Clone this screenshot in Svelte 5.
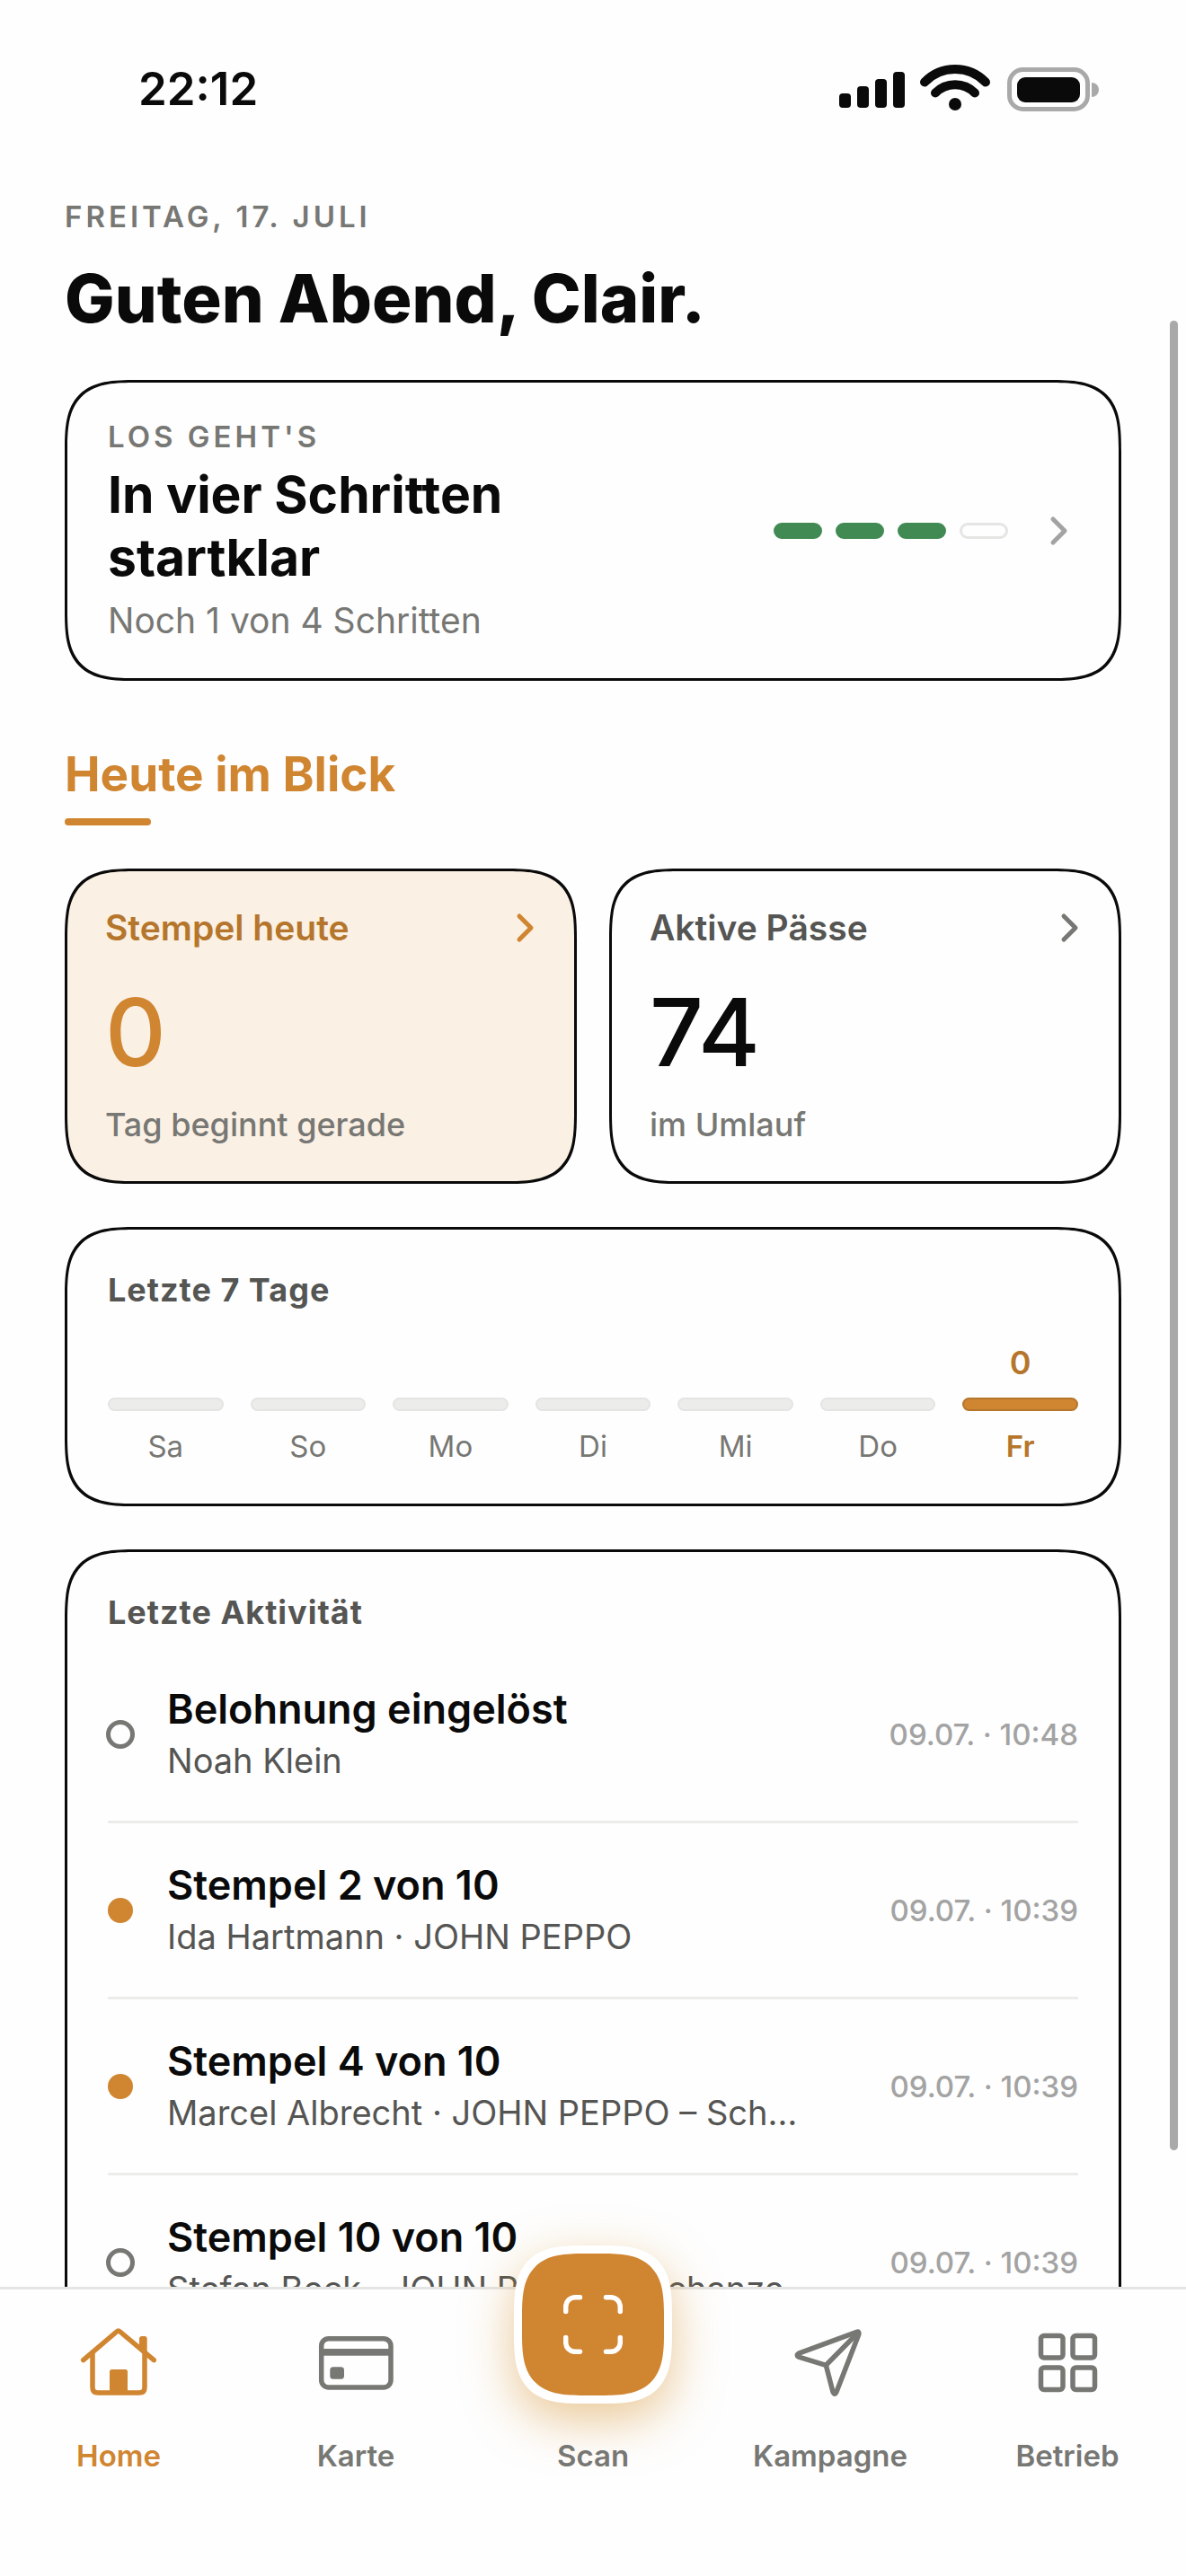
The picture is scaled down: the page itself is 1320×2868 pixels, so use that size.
<script lang="ts">
  interface Activity {
    title: string;
    detail: string;
    time: string;
    kind: 'stamp' | 'reward';
  }

  const steps = [true, true, true, false];

  const stats = [
    { label: 'Stempel heute', value: 0, note: 'Tag beginnt gerade', accent: true },
    { label: 'Aktive Pässe', value: 74, note: 'im Umlauf', accent: false },
  ];

  const days = [
    { name: 'Sa', count: 0 },
    { name: 'So', count: 0 },
    { name: 'Mo', count: 0 },
    { name: 'Di', count: 0 },
    { name: 'Mi', count: 0 },
    { name: 'Do', count: 0 },
    { name: 'Fr', count: 0, today: true },
  ];

  const activities: Activity[] = [
    { title: 'Belohnung eingelöst', detail: 'Noah Klein', time: '09.07. · 10:48', kind: 'reward' },
    { title: 'Stempel 2 von 10', detail: 'Ida Hartmann · JOHN PEPPO', time: '09.07. · 10:39', kind: 'stamp' },
    { title: 'Stempel 4 von 10', detail: 'Marcel Albrecht · JOHN PEPPO – Schanze', time: '09.07. · 10:39', kind: 'stamp' },
    { title: 'Stempel 10 von 10', detail: 'Stefan Beck · JOHN PEPPO – Schanze', time: '09.07. · 10:39', kind: 'reward' },
  ];

  const tabs = [
    { id: 'home', label: 'Home' },
    { id: 'karte', label: 'Karte' },
    { id: 'scan', label: 'Scan' },
    { id: 'kampagne', label: 'Kampagne' },
    { id: 'betrieb', label: 'Betrieb' },
  ];

  let active = $state('home');
</script>

{#snippet chevron()}
  <svg class="chevron" viewBox="0 0 42 42" aria-hidden="true">
    <path d="M14 8 L27 21 L14 34" />
  </svg>
{/snippet}

<div class="shell">
  <div class="status-bar">
    <span class="clock">22:12</span>
    <svg class="status-icons" viewBox="0 0 289 52" aria-hidden="true">
      <rect x="0" y="32" width="13" height="16" rx="4" />
      <rect x="20" y="24" width="13" height="24" rx="4" />
      <rect x="40" y="16" width="13" height="32" rx="4" />
      <rect x="60" y="8" width="13" height="40" rx="4" />
      <path class="wave" d="M95 19.5 A47.2 47.2 0 0 1 163 19.5" />
      <path class="wave" d="M107 31.5 A30.8 30.8 0 0 1 151 31.5" />
      <circle cx="129" cy="44" r="7" />
      <rect class="battery" x="189.5" y="5.5" width="87" height="44" rx="15" />
      <rect x="198" y="14" width="70" height="28" rx="9" />
      <path class="nub" d="M281 20 a8 8 0 0 1 0 16 z" />
    </svg>
  </div>

  <main>
    <header>
      <p class="eyebrow">Freitag, 17. Juli</p>
      <h1>Guten Abend, Clair.</h1>
    </header>

    <button class="card setup" type="button">
      <span class="setup-text">
        <span class="eyebrow">Los geht's</span>
        <span class="setup-title">In vier Schritten startklar</span>
        <span class="setup-note">Noch 1 von 4 Schritten</span>
      </span>
      <span class="steps">
        {#each steps as done}
          <span class="step" class:done></span>
        {/each}
      </span>
      {@render chevron()}
    </button>

    <h2>Heute im Blick</h2>

    <div class="stats">
      {#each stats as stat}
        <button class="card stat" class:accent={stat.accent} type="button">
          <span class="stat-head">
            <span class="stat-label">{stat.label}</span>
            {@render chevron()}
          </span>
          <span class="stat-value">{stat.value}</span>
          <span class="stat-note">{stat.note}</span>
        </button>
      {/each}
    </div>

    <section class="card panel">
      <h3>Letzte 7 Tage</h3>
      <div class="week">
        {#each days as day}
          <div class="day" class:today={day.today}>
            <span class="day-count">{day.today ? day.count : ''}</span>
            <span class="day-bar"></span>
            <span class="day-name">{day.name}</span>
          </div>
        {/each}
      </div>
    </section>

    <section class="card panel">
      <h3>Letzte Aktivität</h3>
      <ul class="activities">
        {#each activities as item}
          <li>
            <span class="dot-slot"><span class="dot {item.kind}"></span></span>
            <div class="activity-text">
              <p class="activity-title">{item.title}</p>
              <p class="activity-detail">{item.detail}</p>
            </div>
            <time>{item.time}</time>
          </li>
        {/each}
      </ul>
    </section>
  </main>

  <nav>
    {#each tabs as tab}
      <button
        class="tab"
        class:active={active === tab.id}
        type="button"
        onclick={() => (active = tab.id)}
      >
        {#if tab.id === 'scan'}
          <span class="scan">
            <svg viewBox="0 0 66 66" aria-hidden="true">
              <path d="M2.7 18.5 V13 A10.3 10.3 0 0 1 13 2.7 H18.5" />
              <path d="M47.5 2.7 H53 A10.3 10.3 0 0 1 63.3 13 V18.5" />
              <path d="M63.3 47.5 V53 A10.3 10.3 0 0 1 53 63.3 H47.5" />
              <path d="M18.5 63.3 H13 A10.3 10.3 0 0 1 2.7 53 V47.5" />
            </svg>
          </span>
        {/if}
        <svg class="tab-icon" viewBox="0 0 96 96" aria-hidden="true">
          {#if tab.id === 'home'}
            <path d="M8.7 45.7 L45.8 14 Q47.7 12.4 49.6 14 L87.3 45.7" />
            <path d="M19 38 V76 Q19 82 25 82 H71 Q77 82 77 76 V38" />
            <path class="solid" d="M71 34 V22 Q71 19 74 19 H77 Q79.7 19 79.7 22 V40 Z" />
            <path class="solid" d="M38 82 V58.5 Q38 56 40.5 56 H55.5 Q58 56 58 58.5 V82 Z" />
          {:else if tab.id === 'karte'}
            <rect x="9.7" y="21.7" width="77.3" height="54.3" rx="8" />
            <rect class="solid" x="9" y="33" width="78" height="7.7" />
            <rect class="solid" x="19.3" y="53.3" width="15.7" height="13.4" rx="3.5" />
          {:else if tab.id === 'kampagne'}
            <path d="M77.5 14.3 L13 38.2 Q9.5 40.3 13 42.2 L43.3 51.3 L51 81 Q53 85.5 55 81 L79.8 17 Q80.5 13.3 77.5 14.3 Z" />
            <path d="M43.3 51.3 L79 15" />
          {:else if tab.id === 'betrieb'}
            <rect x="18.5" y="18.5" width="24.5" height="24.5" rx="3.5" />
            <rect x="54" y="18.5" width="24.5" height="24.5" rx="3.5" />
            <rect x="18.5" y="54" width="24.5" height="24.5" rx="3.5" />
            <rect x="54" y="54" width="24.5" height="24.5" rx="3.5" />
          {/if}
        </svg>
        <span class="tab-label">{tab.label}</span>
      </button>
    {/each}
  </nav>

  <div class="scroll-thumb"></div>
</div>

<style>
  :global(body) {
    background: #fefefe;
  }

  .shell {
    --ink: #0a0a0a;
    --text: #555553;
    --muted: #777774;
    --faint: #a3a3a3;
    --line: #ececeb;
    --accent: #d08530;
    --accent-dark: #b5762c;
    position: relative;
    display: flex;
    flex-direction: column;
    height: 100vh;
    overflow: hidden;
    background: #fefefe;
    color: var(--ink);
    font-family: Inter, 'Liberation Sans', sans-serif;
  }

  h1,
  h2,
  h3,
  p,
  ul {
    margin: 0;
    padding: 0;
  }

  button {
    margin: 0;
    color: inherit;
    font: inherit;
    text-align: left;
    cursor: pointer;
  }

  .status-bar {
    flex: none;
    display: flex;
    align-items: center;
    justify-content: space-between;
    height: 196px;
    padding: 0 97px 0 154px;
  }

  .clock {
    font-size: 51px;
    font-weight: 600;
  }

  .status-icons {
    width: 289px;
    height: 52px;
    fill: var(--ink);
  }

  .wave {
    fill: none;
    stroke: var(--ink);
    stroke-width: 10;
    stroke-linecap: round;
  }

  .battery {
    fill: none;
    stroke: #a9a9a9;
    stroke-width: 5;
  }

  .nub {
    fill: #a9a9a9;
  }

  main {
    flex: 1;
    min-height: 0;
    display: flex;
    flex-direction: column;
    gap: 48px;
    padding: 24px 72px 0;
    overflow: hidden;
  }

  main > * {
    flex: none;
  }

  .eyebrow {
    font-size: 33px;
    line-height: 42px;
    font-weight: 600;
    letter-spacing: 4px;
    text-transform: uppercase;
    color: var(--muted);
  }

  h1 {
    margin-top: 27px;
    font-size: 74px;
    line-height: 86px;
    font-weight: 800;
  }

  .card {
    box-sizing: border-box;
    border: 3px solid var(--ink);
    border-radius: 60px;
    background: #fefefe;
  }

  .setup {
    display: flex;
    align-items: center;
    gap: 36px;
    padding: 39px 45px;
  }

  .setup-text {
    flex: 1;
    display: flex;
    flex-direction: column;
    gap: 9px;
  }

  .setup-title {
    max-width: 500px;
    font-size: 57px;
    line-height: 70px;
    font-weight: 700;
  }

  .setup-note {
    font-size: 39px;
    line-height: 51px;
    color: var(--muted);
  }

  .steps {
    display: flex;
    gap: 15px;
  }

  .step {
    box-sizing: border-box;
    width: 54px;
    height: 18px;
    border: 3px solid #e5e5e4;
    border-radius: 9px;
  }

  .step.done {
    border-color: #418a53;
    background: #418a53;
  }

  .chevron {
    flex: none;
    width: 42px;
    height: 42px;
    fill: none;
    stroke: var(--faint);
    stroke-width: 5;
    stroke-linecap: round;
    stroke-linejoin: round;
  }

  h2 {
    margin-top: 23px;
    font-size: 53px;
    line-height: 66px;
    font-weight: 700;
    color: var(--accent);
  }

  h2::after {
    content: '';
    display: block;
    width: 96px;
    height: 8px;
    margin-top: 16px;
    border-radius: 4px;
    background: var(--accent);
  }

  .stats {
    display: grid;
    grid-template-columns: 1fr 1fr;
    gap: 36px;
  }

  .stat {
    display: flex;
    flex-direction: column;
    padding: 39px 42px;
  }

  .stat-head {
    display: flex;
    align-items: center;
    justify-content: space-between;
    font-size: 39px;
    line-height: 48px;
    font-weight: 600;
    color: var(--text);
  }

  .stat .chevron {
    margin-right: -9px;
    stroke: var(--muted);
  }

  .stat-value {
    margin-top: 39px;
    font-size: 105px;
    line-height: 105px;
    font-weight: 500;
  }

  .stat-note {
    margin-top: 27px;
    font-size: 36px;
    line-height: 48px;
    font-weight: 500;
    color: var(--muted);
  }

  .accent {
    background: #faf0e4;
  }

  .accent .stat-head {
    color: var(--accent-dark);
  }

  .accent .chevron {
    stroke: var(--accent);
  }

  .accent .stat-value {
    color: var(--accent);
  }

  .panel {
    padding: 43px 45px;
  }

  h3 {
    font-size: 36px;
    line-height: 48px;
    font-weight: 700;
    letter-spacing: 1px;
    color: var(--text);
  }

  .week {
    display: grid;
    grid-template-columns: repeat(7, 1fr);
    gap: 30px;
    margin-top: 36px;
  }

  .day {
    display: flex;
    flex-direction: column;
    align-items: center;
    gap: 18px;
    font-size: 33px;
    line-height: 42px;
    color: var(--muted);
  }

  .day-count {
    height: 42px;
    font-size: 36px;
    font-weight: 600;
  }

  .day-bar {
    box-sizing: border-box;
    width: 100%;
    height: 15px;
    border: 2px solid #e4e4e3;
    border-radius: 8px;
    background: var(--line);
  }

  .today {
    font-weight: 600;
    color: var(--accent-dark);
  }

  .today .day-bar {
    border-color: var(--accent-dark);
    background: var(--accent);
  }

  .activities {
    margin-top: 15px;
    list-style: none;
  }

  .activities li {
    display: flex;
    align-items: center;
    gap: 38px;
    padding: 39px 0;
    border-bottom: 3px solid var(--line);
  }

  .dot-slot {
    flex: none;
    display: flex;
    justify-content: center;
    width: 28px;
  }

  .dot {
    box-sizing: border-box;
    flex: none;
    width: 28px;
    height: 28px;
    border-radius: 50%;
    background: var(--accent);
  }

  .dot.reward {
    width: 32px;
    height: 32px;
    border: 5px solid var(--muted);
    background: none;
  }

  .activity-text {
    flex: 1;
    min-width: 0;
  }

  .activity-title {
    font-size: 45px;
    line-height: 60px;
    font-weight: 600;
  }

  .activity-detail {
    font-size: 38px;
    line-height: 55px;
    color: var(--text);
    overflow: hidden;
    text-overflow: ellipsis;
    white-space: nowrap;
  }

  time {
    flex: none;
    margin-left: 48px;
    font-size: 33px;
    font-weight: 500;
    color: var(--faint);
  }

  nav {
    flex: none;
    z-index: 1;
    display: grid;
    grid-template-columns: repeat(5, 1fr);
    height: 319px;
    border-top: 3px solid #e5e5e4;
    background: #fefefe;
  }

  .tab {
    position: relative;
    display: flex;
    flex-direction: column;
    align-items: center;
    gap: 35px;
    padding: 33px 0 0;
    border: none;
    background: none;
    color: var(--muted);
  }

  .tab.active {
    color: var(--accent);
  }

  .tab-icon {
    width: 96px;
    height: 96px;
    fill: none;
    stroke: currentColor;
    stroke-width: 5.5;
    stroke-linecap: round;
    stroke-linejoin: round;
  }

  .tab-icon .solid {
    fill: currentColor;
    stroke: none;
  }

  .tab-label {
    z-index: 1;
    font-size: 33px;
    line-height: 42px;
    font-weight: 600;
  }

  /* raised button that sits across the top edge of the bar */
  .scan {
    box-sizing: border-box;
    position: absolute;
    top: -49px;
    left: 50%;
    display: flex;
    align-items: center;
    justify-content: center;
    width: 176px;
    height: 176px;
    margin-left: -88px;
    border: 9px solid #fff;
    border-radius: 60px;
    background: var(--accent);
    box-shadow: 0 18px 54px rgba(216, 148, 48, 0.5);
  }

  .scan svg {
    width: 66px;
    height: 66px;
    fill: none;
    stroke: #fff;
    stroke-width: 5.5;
    stroke-linecap: round;
  }

  /* continuous corners where the browser can draw them */
  @supports (corner-shape: squircle) {
    .card,
    .scan {
      border-radius: 80px;
      corner-shape: superellipse(1.6);
    }
  }

  .scroll-thumb {
    position: absolute;
    top: 357px;
    right: 9px;
    bottom: 474px;
    width: 9px;
    border-radius: 5px;
    background: #a9a9a9;
  }
</style>
